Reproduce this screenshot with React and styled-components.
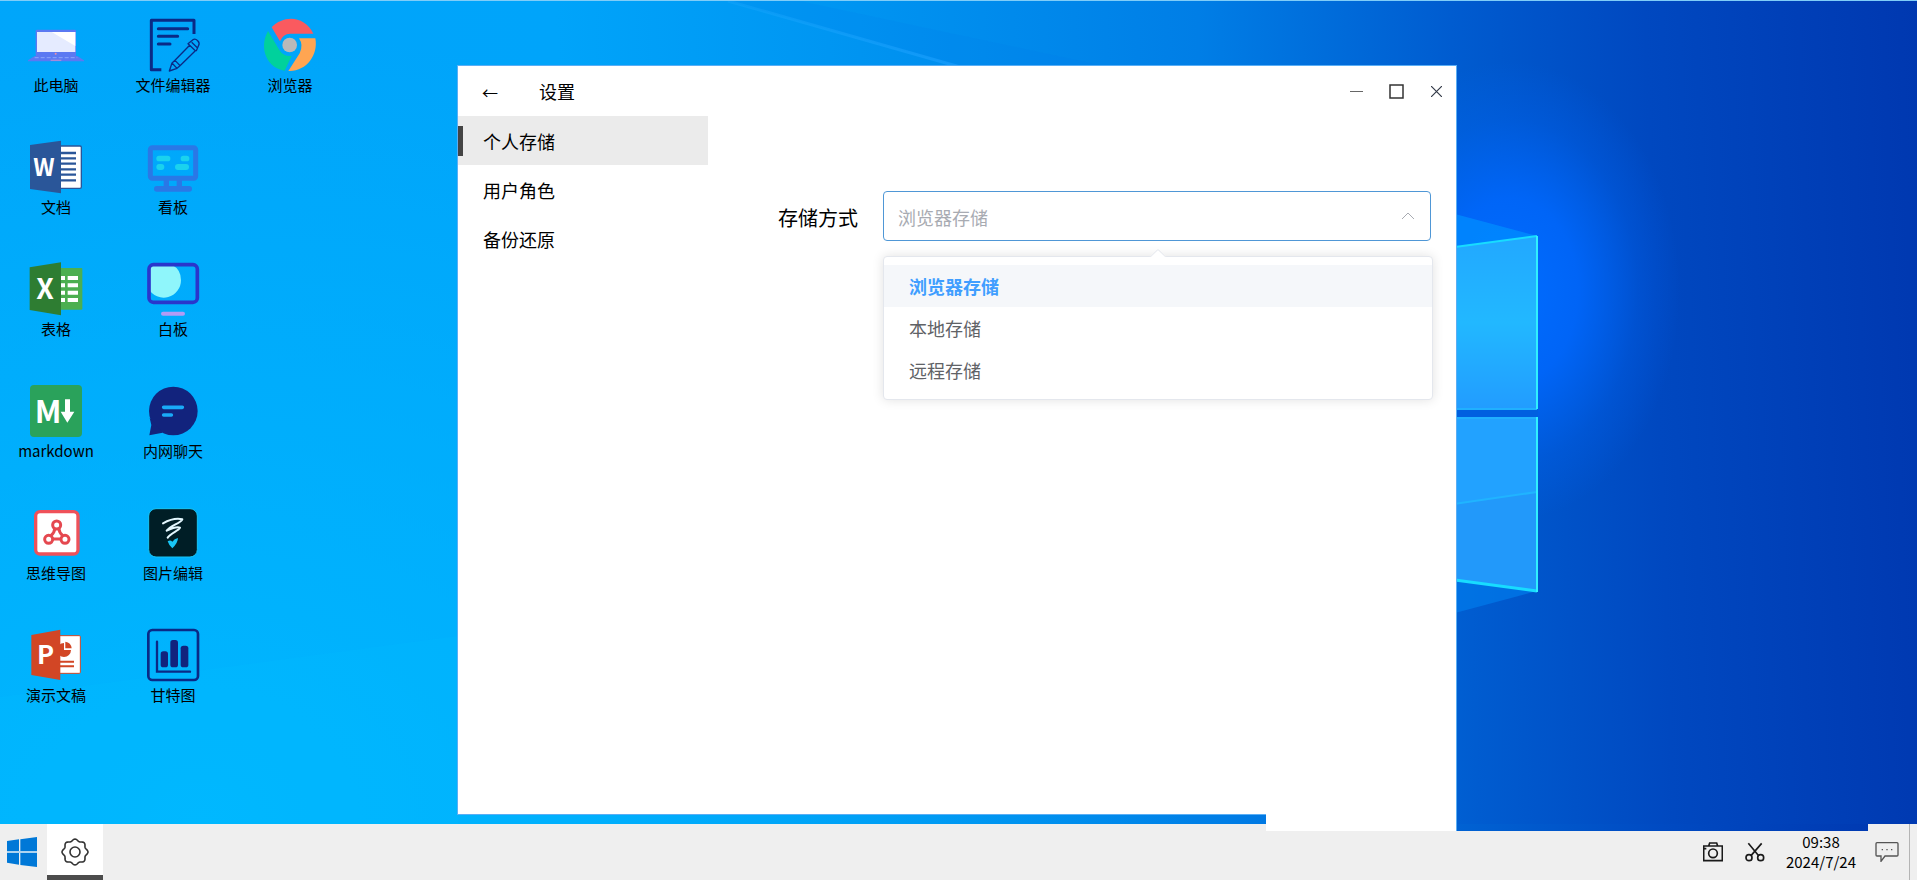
import { useState } from "react";
import styled, { createGlobalStyle } from "styled-components";

const GlobalStyle = createGlobalStyle`
  * {
    box-sizing: border-box;
  }
  body {
    margin: 0;
    overflow: hidden;
    font-family: "Noto Sans CJK SC", "Open Sans", sans-serif;
    color: #000;
  }
  button {
    font-family: inherit;
    border: 0;
    padding: 0;
    background: none;
    color: inherit;
    cursor: pointer;
  }
`;

const Screen = styled.div`
  display: flex;
  flex-direction: column;
  height: 100vh;
`;

const Desktop = styled.main`
  position: relative;
  flex: 1;
  min-height: 0;
  border-top: 1px solid #80cdf8;
  background:
    radial-gradient(ellipse 170px 230px at 1510px 290px, #006cff 0%, rgba(0, 104, 255, 0.85) 40%, rgba(0, 104, 255, 0.25) 75%, rgba(0, 104, 255, 0) 100%),
    radial-gradient(ellipse 1000px 800px at 200px 100%, rgba(0, 184, 255, 0.95) 0%, rgba(0, 184, 255, 0) 100%),
    linear-gradient(88deg, #00a6fa 0%, #00a4fa 30%, #0096f2 44%, #007ee6 63%, #005cd0 76%, #0048c0 86%, #0038b0 100%);
`;

const Wallpaper = styled.svg`
  position: absolute;
  inset: 0;
  width: 100%;
  height: 100%;
`;

const IconGrid = styled.div`
  position: relative;
  display: grid;
  grid-auto-flow: column;
  grid-template-rows: repeat(auto-fill, 122px);
  grid-auto-columns: 100px;
  column-gap: 17px;
  height: 100%;
  padding-left: 6px;
`;

const Shortcut = styled.button`
  display: flex;
  flex-direction: column;
  align-items: center;
  align-self: start;
  gap: 4px;
  padding-top: 18px;
  font-size: 15px;
  line-height: 20px;
  svg {
    width: 52px;
    height: 52px;
    overflow: visible;
  }
`;

const Window = styled.section`
  position: absolute;
  top: 64px;
  left: 457px;
  display: flex;
  flex-direction: column;
  width: 1000px;
  height: 750px;
  background: #fff;
  border: 1px solid #5aaef5;
`;

const WindowTail = styled.div`
  position: absolute;
  right: -1px;
  bottom: -17px;
  width: 191px;
  height: 18px;
  background: #fff;
  border-right: 1px solid #5aaef5;
  z-index: 2;
`;

const DesktopEdge = styled.div`
  position: absolute;
  left: 1457px;
  right: 49px;
  bottom: -7px;
  height: 7px;
  background: linear-gradient(90deg, #0062d3, #004ac2 50%, #003ab2);
  z-index: 2;
`;

const TitleBar = styled.header`
  display: flex;
  align-items: center;
  height: 50px;
  padding-left: 20px;
`;

const BackButton = styled.button`
  width: 24px;
  margin-right: 37px;
  padding-top: 2px;
  font-size: 16px;
  line-height: 24px;
`;

const Title = styled.h1`
  flex: 1;
  margin: 0;
  font-size: 18px;
  font-weight: 400;
  line-height: 24px;
`;

const WindowButton = styled.button`
  display: flex;
  align-items: center;
  justify-content: center;
  width: 40px;
  height: 50px;
`;

const WindowBody = styled.div`
  display: flex;
  flex: 1;
`;

const Sidebar = styled.nav`
  display: flex;
  flex-direction: column;
  width: 250px;
`;

const SidebarItem = styled.button`
  display: flex;
  align-items: center;
  height: 49px;
  font-size: 18px;
  line-height: 24px;
  background: ${(props) => (props.$active ? "#ebebeb" : "transparent")};
  &::before {
    content: "";
    width: 5px;
    height: 30px;
    margin-right: 20px;
    background: ${(props) => (props.$active ? "#444" : "transparent")};
  }
`;

const Content = styled.div`
  flex: 1;
  padding: 75px 25px 0 70px;
`;

const Field = styled.div`
  display: flex;
  align-items: center;
  gap: 25px;
`;

const FieldLabel = styled.label`
  padding-top: 3px;
  font-size: 20px;
  line-height: 28px;
`;

const SelectBox = styled.div`
  position: relative;
  flex: 1;
  display: flex;
  align-items: center;
`;

const Select = styled.select`
  appearance: none;
  width: 100%;
  height: 50px;
  padding: 2px 40px 0 14px;
  border: 1px solid #4f97d6;
  border-radius: 4px;
  outline: 0;
  background: #fff;
  color: #a8abb2;
  font-family: inherit;
  font-size: 18px;
`;

const SelectArrow = styled.svg`
  position: absolute;
  right: 16px;
  width: 14px;
  height: 8px;
  pointer-events: none;
`;

const Menu = styled.div`
  position: absolute;
  top: 65px;
  left: 0;
  right: -2px;
  display: flex;
  flex-direction: column;
  padding: 8px 0;
  border: 1px solid #e4e7ed;
  border-radius: 4px;
  background: #fff;
  box-shadow: 0 0 12px rgba(0, 0, 0, 0.12);
  &::before {
    content: "";
    position: absolute;
    top: -6px;
    left: 50%;
    width: 10px;
    height: 10px;
    margin-left: -6px;
    background: #fff;
    border: 1px solid #e4e7ed;
    border-color: #e4e7ed transparent transparent #e4e7ed;
    border-top-left-radius: 2px;
    transform: rotate(45deg);
  }
`;

const MenuItem = styled.button`
  height: 42px;
  padding: 1px 25px 0;
  font-size: 18px;
  line-height: 41px;
  text-align: left;
  color: ${(props) => (props.$selected ? "#409eff" : "#606266")};
  font-weight: ${(props) => (props.$selected ? 700 : 400)};
  background: ${(props) => (props.$selected ? "#f5f7fa" : "transparent")};
`;

const Taskbar = styled.footer`
  display: flex;
  height: 56px;
  background: #efefef;
`;

const StartButton = styled.button`
  width: 47px;
  padding: 3px 3px 0 0;
  svg {
    width: 30px;
    height: 30px;
  }
`;

const TaskButton = styled.button`
  width: 56px;
  background: #fff;
  border-bottom: 5px solid #4c4c4c;
  padding-top: 8px;
  svg {
    width: 28px;
    height: 28px;
  }
`;

const Tray = styled.div`
  display: flex;
  align-items: center;
  margin-left: auto;
`;

const TrayButton = styled.button`
  width: 42px;
  height: 56px;
  svg {
    display: block;
    margin: 0 auto;
  }
`;

const Clock = styled.time`
  width: 90px;
  font-size: 15px;
  line-height: 20px;
  text-align: center;
`;

const ShowDesktop = styled.button`
  width: 8px;
  height: 56px;
  margin-left: 1px;
  border-left: 1px solid #b4b4b4;
`;

const IconLetter = styled.text`
  font-family: "Noto Sans CJK SC", sans-serif;
  font-weight: 700;
  fill: #fff;
`;

const Svg = ({ children }) => <svg viewBox="0 0 156 156" fill="none" aria-hidden="true">{children}</svg>;

const ComputerIcon = () => (
  <Svg>
    <rect x="17" y="32" width="121" height="80" rx="4" fill="#5b79f2" />
    <path d="M21 39h115v60H21z" fill="#e5ebff" />
    <path d="M65 39h71v42z" fill="#fff" />
    <circle cx="77" cy="104" r="3" fill="#ee8fa6" />
    <path d="M14 111h128l20 13v3H-6v-3z" fill="#5b79f2" />
    <path d="M14 116h128" stroke="#8ba5fb" strokeWidth="3" strokeDasharray="12 6" />
    <path d="M62 124h32" stroke="#a78ad9" strokeWidth="4" />
  </Svg>
);

const EditorIcon = () => (
  <Svg>
    <path d="M141 45V4H13v148h30" stroke="#0a2a86" strokeWidth="9" strokeLinejoin="round" />
    <path d="M34 29h88M34 52h58M34 75h35" stroke="#0a2a86" strokeWidth="9" strokeLinecap="round" />
    <path
      d="M84 124l44-45 17 16-46 45zM84 124l-9 8-8 24 23-8 9-8M75 132l15 16M128 79l-5-5 15-12q7-4 14 3t3 14l-7 16-3 0M134 70l17 16"
      stroke="#0a2a86"
      strokeWidth="4"
      strokeLinejoin="round"
    />
  </Svg>
);

const BrowserIcon = () => (
  <Svg>
    <path d="M23 25C60-13 122-10 148 44H78Q57 45 48 67Z" fill="#fa5a5f" />
    <path d="M12 36C-18 90 12 149 62 155L83 111Q58 113 46 93Z" fill="#00d19c" />
    <path d="M105 58H154C164 108 126 159 73 156L107 103Q119 78 105 58Z" fill="#ffa552" />
    <circle cx="77" cy="78" r="22" fill="#b9b9b9" />
  </Svg>
);

const WordIcon = () => (
  <Svg>
    <rect x="80" y="15" width="74" height="127" rx="4" fill="#fff" stroke="#2a5699" strokeWidth="4" />
    <path d="M90 36h48M90 52h48M90 68h48M90 85h48M90 101h48M90 118h48" stroke="#2a5699" strokeWidth="7" />
    <path d="M0 12L93-1v158L0 144z" fill="#2a5699" />
    <IconLetter x="42" y="104" fontSize="70" textAnchor="middle">W</IconLetter>
  </Svg>
);

const BoardIcon = () => (
  <Svg>
    <rect x="10" y="20" width="136" height="92" rx="6" stroke="#2a78e6" strokeWidth="15" />
    <path d="M58 117v20M97 117v20" stroke="#2a78e6" strokeWidth="16" />
    <rect x="21" y="135" width="114" height="17" rx="8" fill="#2a78e6" />
    <g fill="#1ad2ee">
      <rect x="28" y="44" width="42" height="17" rx="8" />
      <rect x="101" y="44" width="26" height="17" rx="8" />
      <rect x="28" y="69" width="24" height="18" rx="9" />
      <rect x="84" y="69" width="42" height="18" rx="9" />
    </g>
  </Svg>
);

const SheetIcon = () => (
  <Svg>
    <path d="M90 15h64q3 0 3 3v119q0 3-3 3H90z" fill="#4caf50" />
    <path d="M93 45h12M93 67h12M93 89h12M93 111h12M113 45h31M113 67h31M113 89h31M113 111h31" stroke="#fff" strokeWidth="12" />
    <path d="M-1 13L93-2v159L-1 141z" fill="#2e7d32" />
    <IconLetter x="45" y="109" fontSize="84" textAnchor="middle">X</IconLetter>
  </Svg>
);

const WhiteboardIcon = () => (
  <Svg>
    <path d="M5 12Q8 5 18 5H75A52 52 0 0 1 102 52A52 52 0 0 1 5 78Z" fill="#8ff6fb" />
    <rect x="6" y="5" width="145" height="113" rx="13" stroke="#2a35cc" strokeWidth="11" />
    <rect x="42" y="146" width="72" height="12" rx="6" fill="#b39bf5" />
  </Svg>
);

const MarkdownIcon = () => (
  <Svg>
    <rect width="156" height="156" rx="12" fill="#2aa25b" />
    <IconLetter x="54" y="113" fontSize="94" textAnchor="middle">M</IconLetter>
    <path d="M105 43h15v37h13l-21 33-20-33h13z" fill="#fff" />
  </Svg>
);

const ChatIcon = () => (
  <Svg>
    <circle cx="79" cy="78" r="73" fill="#12237d" />
    <path d="M8 98l5 22-6 31 40-8z" fill="#12237d" />
    <path d="M50 67h56M50 90h23" stroke="#19aaf8" strokeWidth="11" strokeLinecap="round" />
  </Svg>
);

const MindMapIcon = () => (
  <Svg>
    <rect x="17" y="14" width="127" height="127" rx="13" fill="#fff" stroke="#ef5159" strokeWidth="10" />
    <g stroke="#e5484f" strokeWidth="9">
      <circle cx="80" cy="54" r="12" />
      <circle cx="56" cy="97" r="12" />
      <circle cx="105" cy="97" r="12" />
      <path d="M74 66Q74 75 63 86M87 66Q87 75 98 86M69 96H92" />
    </g>
  </Svg>
);

const ImageIcon = () => (
  <Svg>
    <rect x="5" y="5" width="146" height="145" rx="22" fill="#001e26" stroke="#18c6f6" strokeWidth="3" />
    <path d="M48 49C66 39 88 33 106 37C101 48 70 56 59 71C72 65 88 57 99 62C95 72 72 77 62 92" stroke="#e4f8ff" strokeWidth="6" strokeLinecap="round" strokeLinejoin="round" />
    <path d="M62 103q8-5 14 1q6-9 17-11q0 14-17 31q-10-8-14-21z" fill="#18c6f6" />
  </Svg>
);

const SlidesIcon = () => (
  <Svg>
    <rect x="80" y="20" width="71" height="113" rx="3" fill="#fff" stroke="#d24625" strokeWidth="3" />
    <path d="M102 42a21 21 0 1 0 21 21h-21z" fill="#d24625" />
    <path d="M106 38q17 2 19 20h-19z" fill="#d24625" />
    <path d="M90 98h42M90 112h42" stroke="#d24625" strokeWidth="6" />
    <path d="M4 18L91 2v151L4 138z" fill="#d24625" />
    <IconLetter x="47" y="105" fontSize="77" textAnchor="middle">P</IconLetter>
  </Svg>
);

const GanttIcon = () => (
  <Svg>
    <rect x="4" y="3" width="149" height="150" rx="12" stroke="#0a2a86" strokeWidth="8" />
    <path d="M30 38v90h99" stroke="#0a2a86" strokeWidth="7" strokeLinecap="round" />
    <g fill="#12237d">
      <rect x="41" y="67" width="22" height="48" rx="8" />
      <rect x="70" y="33" width="23" height="82" rx="8" />
      <rect x="101" y="50" width="23" height="65" rx="8" />
    </g>
  </Svg>
);

// eight-lobed outline around the settings gear
const gearPoints = Array.from({ length: 96 }, (_, i) => {
  const a = (i / 96) * Math.PI * 2;
  const r = 12 + Math.cos(a * 8);
  return `${(14 + r * Math.cos(a)).toFixed(2)},${(14 + r * Math.sin(a)).toFixed(2)}`;
}).join(" ");

const shortcuts = [
  { name: "此电脑", Icon: ComputerIcon },
  { name: "文档", Icon: WordIcon },
  { name: "表格", Icon: SheetIcon },
  { name: "markdown", Icon: MarkdownIcon },
  { name: "思维导图", Icon: MindMapIcon },
  { name: "演示文稿", Icon: SlidesIcon },
  { name: "文件编辑器", Icon: EditorIcon },
  { name: "看板", Icon: BoardIcon },
  { name: "白板", Icon: WhiteboardIcon },
  { name: "内网聊天", Icon: ChatIcon },
  { name: "图片编辑", Icon: ImageIcon },
  { name: "甘特图", Icon: GanttIcon },
  { name: "浏览器", Icon: BrowserIcon },
];

const sections = ["个人存储", "用户角色", "备份还原"];
const storageTypes = ["浏览器存储", "本地存储", "远程存储"];

const WallpaperArt = () => (
  <Wallpaper aria-hidden="true">
    <defs>
      <linearGradient id="pane" x1="0" y1="0" x2="0" y2="1">
        <stop offset="0" stopColor="#22a8ff" />
        <stop offset="0.5" stopColor="#22b8ff" />
        <stop offset="1" stopColor="#229cff" />
      </linearGradient>
      <linearGradient id="beam" x1="0" y1="0" x2="1" y2="0">
        <stop offset="0" stopColor="#1eaaff" stopOpacity="0.3" />
        <stop offset="1" stopColor="#1ea0ff" stopOpacity="0.6" />
      </linearGradient>
    </defs>
    <path d="M728 0L955 64H1100L800 0z" fill="#0078e8" opacity="0.15" />
    <path d="M728 0L960 66" stroke="url(#beam)" strokeWidth="3" />
    <path d="M0 696L458 635V823H0z" fill="#00baff" opacity="0.25" />
    <path d="M1440 209L1537 235L1440 250z" fill="#0090ff" opacity="0.7" />
    <path d="M1440 616L1537 590L1440 575z" fill="#0080f0" opacity="0.6" />
    <path d="M1440 408H1538V417H1440z" fill="#0060e0" />
    <path d="M1440 248L1537 235V408H1440z" fill="url(#pane)" />
    <path d="M1440 416H1537V590L1440 577z" fill="#2299fa" />
    <path d="M1440 416H1537V491L1440 505z" fill="#22a2ff" />
    <path d="M1440 505L1537 491" stroke="#20b4ff" strokeWidth="2" />
    <path d="M1440 408H1537M1440 417H1537" stroke="#20b0ff" strokeWidth="2" />
    <path d="M1440 248L1537 235" stroke="#18dcff" strokeWidth="2" />
    <path d="M1440 577L1537 590" stroke="#18dcff" strokeWidth="3" />
    <path d="M1537 235V408M1537 416V591" stroke="#30f0ff" strokeWidth="2" />
  </Wallpaper>
);

const StorageSelect = () => {
  const [open, setOpen] = useState(true);
  const [value, setValue] = useState(storageTypes[0]);

  const choose = (type) => {
    setValue(type);
    setOpen(false);
  };

  return (
    <Field>
      <FieldLabel htmlFor="storage">存储方式</FieldLabel>
      <SelectBox>
        <Select
          id="storage"
          value={value}
          onChange={(e) => choose(e.target.value)}
          onMouseDown={(e) => {
            e.preventDefault();
            setOpen(!open);
          }}
        >
          {storageTypes.map((type) => (
            <option key={type}>{type}</option>
          ))}
        </Select>
        <SelectArrow viewBox="0 0 14 8" fill="none" stroke="#a8abb2">
          <path d={open ? "M1 7l6-6 6 6" : "M1 1l6 6 6-6"} />
        </SelectArrow>
        {open && (
          <Menu>
            {storageTypes.map((type) => (
              <MenuItem key={type} $selected={type === value} onClick={() => choose(type)}>
                {type}
              </MenuItem>
            ))}
          </Menu>
        )}
      </SelectBox>
    </Field>
  );
};

const SettingsWindow = ({ onClose }) => {
  const [active, setActive] = useState(sections[0]);

  return (
    <Window>
      <TitleBar>
        <BackButton>←</BackButton>
        <Title>设置</Title>
        <WindowButton aria-label="最小化">
          <svg width="13" height="15" stroke="#666">
            <path d="M0 7.5h13" />
          </svg>
        </WindowButton>
        <WindowButton aria-label="最大化">
          <svg width="15" height="15" fill="none" stroke="#333" strokeWidth="1.5">
            <rect x="1" y="1" width="13" height="13" />
          </svg>
        </WindowButton>
        <WindowButton aria-label="关闭" onClick={onClose}>
          <svg width="11" height="11" stroke="#333a48" strokeWidth="1.2">
            <path d="M0 0l11 11M11 0L0 11" />
          </svg>
        </WindowButton>
      </TitleBar>
      <WindowBody>
        <Sidebar>
          {sections.map((name) => (
            <SidebarItem key={name} $active={name === active} onClick={() => setActive(name)}>
              {name}
            </SidebarItem>
          ))}
        </Sidebar>
        <Content>{active === sections[0] && <StorageSelect />}</Content>
      </WindowBody>
      <WindowTail />
    </Window>
  );
};

const App = () => {
  const [open, setOpen] = useState(true);

  return (
    <Screen>
      <GlobalStyle />
      <Desktop>
        <WallpaperArt />
        <IconGrid>
          {shortcuts.map(({ name, Icon }) => (
            <Shortcut key={name}>
              <Icon />
              {name}
            </Shortcut>
          ))}
        </IconGrid>
        {open && <SettingsWindow onClose={() => setOpen(false)} />}
        <DesktopEdge />
      </Desktop>
      <Taskbar>
        <StartButton aria-label="开始">
          <svg viewBox="0 0 90 90" fill="#0078d7">
            <path d="M0 12l36-5v35H0zM40 7l50-7v42H40zM0 48h36v35L0 77zM40 48h50v42l-50-6z" />
            <path d="M0 45h90" stroke="#8cc4f0" strokeWidth="4" />
          </svg>
        </StartButton>
        <TaskButton aria-label="设置" onClick={() => setOpen(!open)}>
          <svg viewBox="0 0 28 28" fill="none" stroke="#333" strokeWidth="1.6">
            <polygon points={gearPoints} />
            <circle cx="14" cy="14" r="5" />
          </svg>
        </TaskButton>
        <Tray>
          <TrayButton aria-label="截图">
            <svg width="20" height="20" viewBox="0 0 60 60" fill="none" stroke="#1a1a1a" strokeWidth="5">
              <path d="M2 12h56v44H2zM17 12l3-9h21l3 9M2 20h8" />
              <circle cx="30" cy="34" r="13" />
            </svg>
          </TrayButton>
          <TrayButton aria-label="剪切">
            <svg width="20" height="20" viewBox="0 0 60 60" fill="none" stroke="#1a1a1a" strokeWidth="5">
              <circle cx="12" cy="47" r="9" />
              <circle cx="47" cy="47" r="9" />
              <path d="M10 4l31 37M50 4L18 41" />
            </svg>
          </TrayButton>
          <Clock>
            09:38
            <br />
            2024/7/24
          </Clock>
          <TrayButton aria-label="通知">
            <svg width="24" height="20" viewBox="0 0 72 60" fill="none" stroke="#555" strokeWidth="4">
              <path d="M6 2h60q3 0 3 3v34q0 3-3 3H30L18 58V42H6q-3 0-3-3V5q0-3 3-3z" />
              <path d="M20 23h4M34 23h4M48 23h4" strokeWidth="4" />
            </svg>
          </TrayButton>
          <ShowDesktop aria-label="显示桌面" />
        </Tray>
      </Taskbar>
    </Screen>
  );
};

export default App;
